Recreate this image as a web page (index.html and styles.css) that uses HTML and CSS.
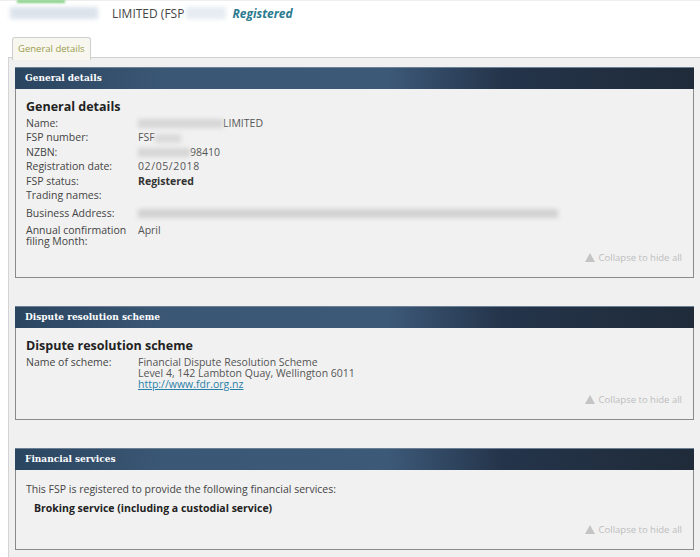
FILE: index.html
```html
<!DOCTYPE html>
<html lang="en">
<head>
  <meta charset="UTF-8">
  <title>FSP details</title>
  <link rel="stylesheet" href="styles.css">
</head>
<body>
  <div class="topbar">
    <span class="flash"></span>
    <span class="blur blur-name"></span>
    <span class="title">LIMITED (FSP</span>
    <span class="blur blur-num"></span>
    <span class="status">Registered</span>
  </div>

  <div class="tabs">
    <div class="tab">General details</div>
  </div>

  <div class="tab-content">

    <div class="panel">
      <div class="panel-head">General details</div>
      <div class="panel-body body-general">
        <h2>General details</h2>
        <div class="row"><span class="label">Name:</span><span class="value"><span class="blur blur-inline w85"></span>LIMITED</span></div>
        <div class="row"><span class="label">FSP number:</span><span class="value">FSF<span class="blur blur-inline w30"></span></span></div>
        <div class="row"><span class="label">NZBN:</span><span class="value"><span class="blur blur-inline w50"></span>98410</span></div>
        <div class="row"><span class="label">Registration date:</span><span class="value mono">02/05/2018</span></div>
        <div class="row"><span class="label">FSP status:</span><span class="value strong">Registered</span></div>
        <div class="row"><span class="label">Trading names:</span><span class="value"></span></div>
        <div class="row row-gap"><span class="label">Business Address:</span><span class="value"><span class="blur blur-inline w420"></span></span></div>
        <div class="row row-gap"><span class="label">Annual confirmation<br>filing Month:</span><span class="value">April</span></div>
        <div class="collapse"><span class="tri"></span>Collapse to hide all</div>
      </div>
    </div>

    <div class="panel">
      <div class="panel-head">Dispute resolution scheme</div>
      <div class="panel-body body-dispute">
        <h2>Dispute resolution scheme</h2>
        <div class="row"><span class="label">Name of scheme:</span><span class="value">Financial Dispute Resolution Scheme<br>Level 4, 142 Lambton Quay, Wellington 6011<br><a href="#">http://www.fdr.org.nz</a></span></div>
        <div class="collapse"><span class="tri"></span>Collapse to hide all</div>
      </div>
    </div>

    <div class="panel">
      <div class="panel-head">Financial services</div>
      <div class="panel-body body-services">
        <p class="intro">This FSP is registered to provide the following financial services:</p>
        <p class="service">Broking service (including a custodial service)</p>
        <div class="collapse"><span class="tri"></span>Collapse to hide all</div>
      </div>
    </div>

  </div>
</body>
</html>
```

FILE: styles.css
```css
body{
  margin: 0;
  font-family: "Open Sans", "DejaVu Sans", sans-serif;
  color: #333;
  background: #fff;
}

.topbar{
  position: relative;
  height: 24px;
  padding-left: 10px;
  display: flex;
  align-items: center;
  font-size: 12px;
  border-top: 1px solid #eee;
}
.flash{
  position: absolute;
  left: 17px;
  top: -1px;
  width: 48px;
  height: 3px;
  background: #7fcf7f;
  filter: blur(1px);
}
.blur{
  display: inline-block;
  background: #d9dde2;
  filter: blur(2px);
}
.blur-name{
  width: 88px;
  height: 12px;
  background: #dbe3ec;
  margin-right: 14px;
}
.blur-num{
  width: 40px;
  height: 12px;
  background: #e6ecf2;
  margin: 0 6px 0 2px;
}
.title{
  color: #444;
}
.status{
  color: #2b7a90;
  font-weight: bold;
  font-style: italic;
}

.tabs{
  padding: 10px 0 0 12px;
  height: 23px;
}
.tab{
  display: inline-block;
  height: 22px;
  line-height: 22px;
  padding: 0 5px;
  font-size: 9.5px;
  color: #9c9c4e;
  background: #f7f7ef;
  border: 1px solid #cfcfcf;
  border-bottom: none;
  border-radius: 3px 3px 0 0;
  position: relative;
  z-index: 1;
}

.tab-content{
  margin-left: 8px;
  border-left: 1px solid #d4d4d4;
  border-top: 1px solid #d0d0d0;
  background: #f0f0f0;
  padding: 9px 6px 9px 6px;
  margin-top: -1px;
}

.panel{
  margin-bottom: 28px;
}
.panel:last-child{
  margin-bottom: 0;
}
.panel-head{
  height: 21px;
  line-height: 21px;
  padding-left: 10px;
  font-family: "DejaVu Serif", serif;
  font-size: 9px;
  font-weight: bold;
  color: #fff;
  background: linear-gradient(to right, #2a4560 0%, #3a5775 22%, #3c5978 55%, #24344a 72%, #1f2b39 100%);
  border-top: 1px solid #6d7f92;
}
.panel-body{
  position: relative;
  box-sizing: border-box;
  border: 1px solid #8a8a8a;
  border-top: none;
  background: #f1f1f1;
  padding: 10px 10px 0 10px;
  font-size: 10.5px;
  color: #444;
}
.body-general{ height: 189px; }
.body-dispute{ height: 92px; }
.body-services{ height: 80px; }

h2{
  margin: 0 0 1px 0;
  font-size: 12.5px;
  font-weight: bold;
  color: #222;
  line-height: 16px;
}

.row{
  display: flex;
  line-height: 11px;
  padding: 1.75px 0;
}
.row-gap{
  margin-top: 3px;
}
.label{
  width: 112px;
  flex-shrink: 0;
}
.value{
  color: #555;
}
.mono{
  letter-spacing: 0.6px;
}
.strong{
  font-weight: bold;
  color: #333;
}
.blur-inline{
  height: 9px;
  vertical-align: middle;
}
.w85{ width: 85px; background: #d6d6d6; }
.w30{ width: 26px; background: #dadada; }
.w50{ width: 52px; background: #d6d6d6; }
.w420{ width: 420px; background: #d2d2d2; }

a{
  color: #2a7fa8;
}

.intro{
  margin: 2px 0 0 0;
  line-height: 14px;
}
.service{
  margin: 5px 0 0 8px;
  font-weight: bold;
  color: #222;
}

.collapse{
  position: absolute;
  right: 11px;
  bottom: 13px;
  font-size: 9.5px;
  color: #bdbdbd;
  display: flex;
  align-items: center;
}
.tri{
  width: 0;
  height: 0;
  border-left: 5px solid transparent;
  border-right: 5px solid transparent;
  border-bottom: 9px solid #c4c4c4;
  margin-right: 4px;
}
```
